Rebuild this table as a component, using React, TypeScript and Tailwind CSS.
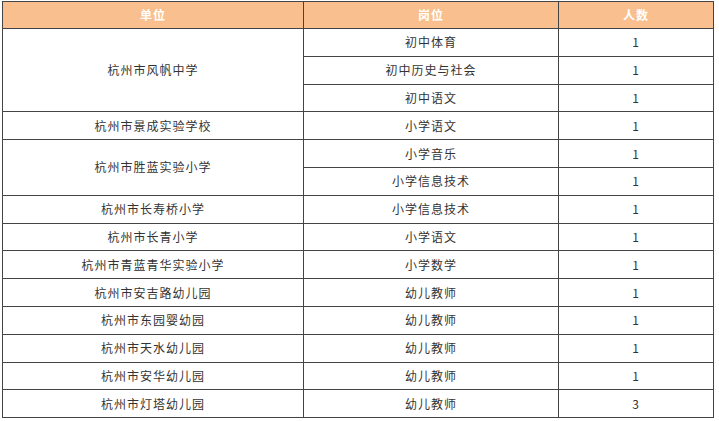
const rows: { unit: string; span: number; jobs: [string, string][] }[] = [
  { unit: "杭州市风帆中学", span: 3, jobs: [["初中体育", "1"], ["初中历史与社会", "1"], ["初中语文", "1"]] },
  { unit: "杭州市景成实验学校", span: 1, jobs: [["小学语文", "1"]] },
  { unit: "杭州市胜蓝实验小学", span: 2, jobs: [["小学音乐", "1"], ["小学信息技术", "1"]] },
  { unit: "杭州市长寿桥小学", span: 1, jobs: [["小学信息技术", "1"]] },
  { unit: "杭州市长青小学", span: 1, jobs: [["小学语文", "1"]] },
  { unit: "杭州市青蓝青华实验小学", span: 1, jobs: [["小学数学", "1"]] },
  { unit: "杭州市安吉路幼儿园", span: 1, jobs: [["幼儿教师", "1"]] },
  { unit: "杭州市东园婴幼园", span: 1, jobs: [["幼儿教师", "1"]] },
  { unit: "杭州市天水幼儿园", span: 1, jobs: [["幼儿教师", "1"]] },
  { unit: "杭州市安华幼儿园", span: 1, jobs: [["幼儿教师", "1"]] },
  { unit: "杭州市灯塔幼儿园", span: 1, jobs: [["幼儿教师", "3"]] },
];

const cell = "border border-[#444] text-center align-middle p-0";

export default function App() {
  return (
    <div className="w-[719px] h-[421px] bg-white pt-[1px] pl-[2px]" style={{ fontFamily: '"Noto Sans CJK SC", "Noto Sans", sans-serif' }}>
      <table className="border-collapse w-[711px] table-fixed text-[12px] text-[#333] tracking-[1px] border border-[#666]">
        <colgroup>
          <col className="w-[301px]" />
          <col className="w-[255px]" />
          <col className="w-[155px]" />
        </colgroup>
        <thead>
          <tr className="h-[27px] bg-[#f9bf8f] text-white font-bold">
            <th className={cell}>单位</th>
            <th className={cell}>岗位</th>
            <th className={cell}>人数</th>
          </tr>
        </thead>
        <tbody>
          {rows.map((r) =>
            r.jobs.map(([job, n], i) => (
              <tr key={r.unit + i} className="h-[27.8px]">
                {i === 0 && (
                  <td rowSpan={r.span} className={cell}>
                    {r.unit}
                  </td>
                )}
                <td className={cell}>{job}</td>
                <td className={cell}>{n}</td>
              </tr>
            ))
          )}
        </tbody>
      </table>
    </div>
  );
}
